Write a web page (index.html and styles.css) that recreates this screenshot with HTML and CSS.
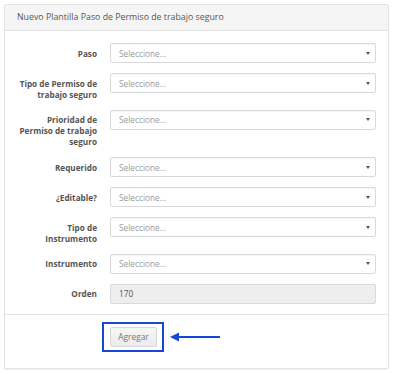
FILE: index.html
```html
<!DOCTYPE html>
<html lang="es">
<head>
<meta charset="utf-8">
<title>Nuevo Plantilla Paso de Permiso de trabajo seguro</title>
<link rel="stylesheet" href="styles.css">
</head>
<body>
<div class="page">
  <div class="panel">
    <div class="panel-heading">Nuevo Plantilla Paso de Permiso de trabajo seguro</div>
    <div class="panel-body">
      <div class="form-group">
        <label class="control-label">Paso</label>
        <div class="select"><span class="placeholder">Seleccione...</span><span class="caret"></span></div>
      </div>
      <div class="form-group">
        <label class="control-label">Tipo de Permiso de trabajo seguro</label>
        <div class="select"><span class="placeholder">Seleccione...</span><span class="caret"></span></div>
      </div>
      <div class="form-group">
        <label class="control-label">Prioridad de Permiso de trabajo seguro</label>
        <div class="select"><span class="placeholder">Seleccione...</span><span class="caret"></span></div>
      </div>
      <div class="form-group">
        <label class="control-label">Requerido</label>
        <div class="select"><span class="placeholder">Seleccione...</span><span class="caret"></span></div>
      </div>
      <div class="form-group">
        <label class="control-label">¿Editable?</label>
        <div class="select"><span class="placeholder">Seleccione...</span><span class="caret"></span></div>
      </div>
      <div class="form-group">
        <label class="control-label">Tipo de Instrumento</label>
        <div class="select"><span class="placeholder">Seleccione...</span><span class="caret"></span></div>
      </div>
      <div class="form-group">
        <label class="control-label">Instrumento</label>
        <div class="select"><span class="placeholder">Seleccione...</span><span class="caret"></span></div>
      </div>
      <div class="form-group">
        <label class="control-label">Orden</label>
        <div class="input-readonly">170</div>
      </div>
    </div>
    <div class="panel-footer">
      <div class="btn-wrap">
        <button class="btn" type="button">Agregar</button>
        <span class="highlight"></span>
        <svg class="arrow" width="52" height="12" viewBox="0 0 52 12">
          <line x1="7" y1="6" x2="50" y2="6" stroke="#1747d6" stroke-width="2.2"/>
          <polygon points="0,6 9,1.5 9,10.5" fill="#1747d6"/>
        </svg>
      </div>
    </div>
  </div>
</div>
</body>
</html>
```
FILE: styles.css
```css
* { box-sizing: border-box; }
html, body { margin: 0; padding: 0; background: #fff; }
body {
  font-family: "Open Sans", "Liberation Sans", sans-serif;
  font-size: 8px;
  color: #555;
}
.page {
  padding: 4px 6px 5px 4px;
}
.panel {
  border: 1px solid #e3e3e3;
  border-radius: 2px;
  box-shadow: 0 1px 2px rgba(0,0,0,0.06);
  background: #fff;
}
.panel-heading {
  height: 26px;
  line-height: 25px;
  padding: 0 12px;
  background: #f5f5f5;
  border-bottom: 1px solid #e3e3e3;
  font-size: 8.8px;
  color: #555;
}
.panel-body {
  padding: 12px 12px 0 11px;
}
.form-group {
  display: grid;
  grid-template-columns: 81px 1fr;
  column-gap: 13px;
  align-items: start;
  margin-bottom: 10px;
}
.control-label {
  padding-top: 4.5px;
  line-height: 11px;
  text-align: right;
  font-weight: 700;
  font-size: 8.2px;
  color: #555;
}
.select {
  height: 20px;
  border: 1px solid #d9d9d9;
  border-radius: 2px;
  background: #fff;
  box-shadow: inset 0 1px 1px rgba(0,0,0,0.04);
  display: flex;
  align-items: center;
  justify-content: space-between;
  padding: 0 5px 0 8px;
}
.placeholder {
  color: #9a9a9a;
  font-size: 8.3px;
}
.caret {
  width: 0;
  height: 0;
  border-left: 2.5px solid transparent;
  border-right: 2.5px solid transparent;
  border-top: 3px solid #555;
}
.input-readonly {
  height: 20px;
  border: 1px solid #d9d9d9;
  border-radius: 2px;
  background: #eeeeee;
  display: flex;
  align-items: center;
  padding: 0 8px;
  color: #555;
  font-size: 8.3px;
}
.panel-footer {
  border-top: 1px solid #e3e3e3;
  padding: 12px 12px 21px 105px;
}
.btn-wrap {
  position: relative;
  width: 47px;
  height: 20px;
}
.btn {
  width: 47px;
  height: 20px;
  padding: 0;
  border: 1px solid #d6d6d6;
  border-radius: 2px;
  background: linear-gradient(#f7f7f7, #ebebeb);
  font-family: "Open Sans", "Liberation Sans", sans-serif;
  font-size: 8.3px;
  color: #777;
}
.highlight {
  position: absolute;
  left: -8px;
  top: -5px;
  width: 62px;
  height: 30px;
  border: 2.5px solid #1747d6;
  pointer-events: none;
}
.arrow {
  position: absolute;
  left: 60px;
  top: 4px;
}
```
